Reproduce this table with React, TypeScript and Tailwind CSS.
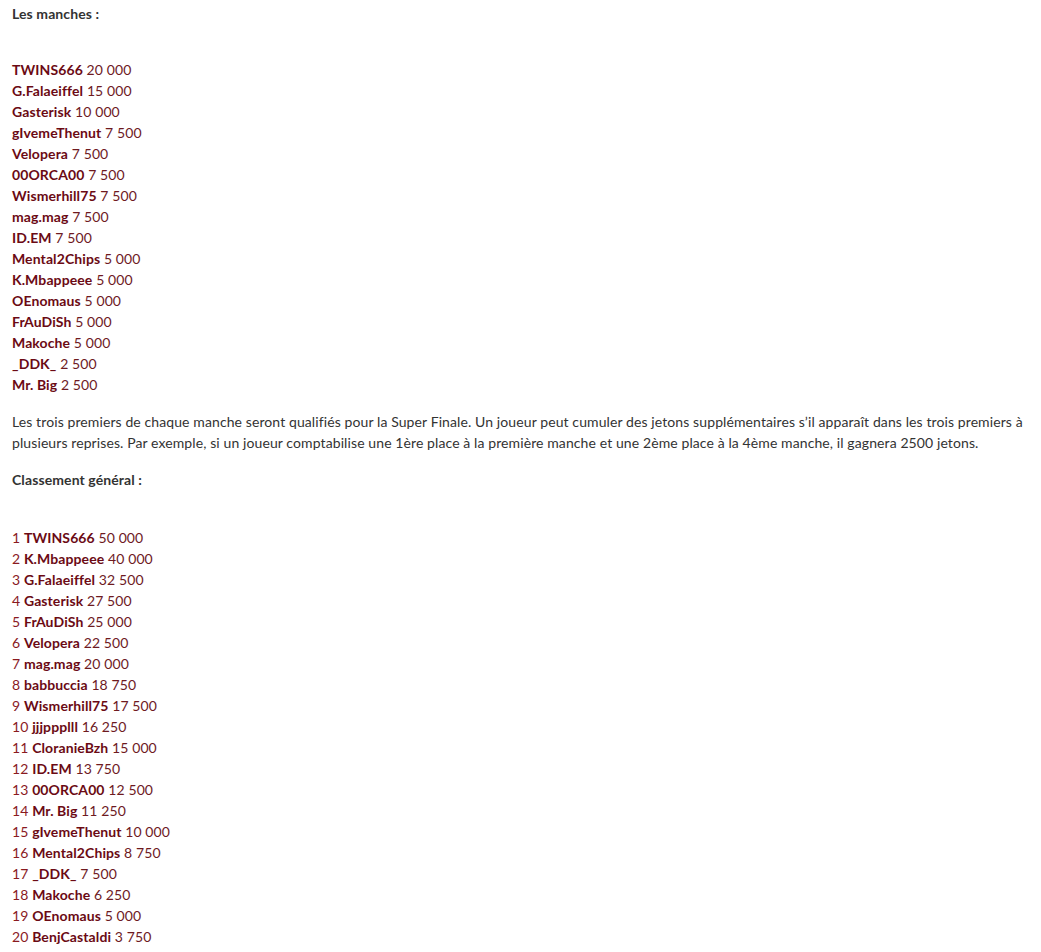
import React from "react";

const manches: [string, string][] = [
  ["TWINS666", "20 000"],
  ["G.Falaeiffel", "15 000"],
  ["Gasterisk", "10 000"],
  ["gIvemeThenut", "7 500"],
  ["Velopera", "7 500"],
  ["00ORCA00", "7 500"],
  ["Wismerhill75", "7 500"],
  ["mag.mag", "7 500"],
  ["ID.EM", "7 500"],
  ["Mental2Chips", "5 000"],
  ["K.Mbappeee", "5 000"],
  ["OEnomaus", "5 000"],
  ["FrAuDiSh", "5 000"],
  ["Makoche", "5 000"],
  ["_DDK_", "2 500"],
  ["Mr. Big", "2 500"],
];

const general: [string, string][] = [
  ["TWINS666", "50 000"],
  ["K.Mbappeee", "40 000"],
  ["G.Falaeiffel", "32 500"],
  ["Gasterisk", "27 500"],
  ["FrAuDiSh", "25 000"],
  ["Velopera", "22 500"],
  ["mag.mag", "20 000"],
  ["babbuccia", "18 750"],
  ["Wismerhill75", "17 500"],
  ["jjjppplll", "16 250"],
  ["CloranieBzh", "15 000"],
  ["ID.EM", "13 750"],
  ["00ORCA00", "12 500"],
  ["Mr. Big", "11 250"],
  ["gIvemeThenut", "10 000"],
  ["Mental2Chips", "8 750"],
  ["_DDK_", "7 500"],
  ["Makoche", "6 250"],
  ["OEnomaus", "5 000"],
  ["BenjCastaldi", "3 750"],
];

export default function App() {
  return (
    <div
      className="bg-white min-h-[952px] pl-3 pr-3 pt-[3px] text-[14px] leading-[21px] tracking-[0.1px] text-[#333333]"
      style={{ fontFamily: "Lato, 'Open Sans', sans-serif" }}
    >
      <p className="font-bold text-[#333333]">Les manches :</p>
      <div className="mt-[35px] text-[#6e1a1f]">
        {manches.map(([n, v], i) => (
          <div key={i}>
            <span className="font-bold text-[#6b0a14]">{n}</span> {v}
          </div>
        ))}
      </div>
      <p className="mt-[17px] leading-[20.5px]">
        Les trois premiers de chaque manche seront qualifiés pour la Super Finale. Un joueur peut cumuler des jetons supplémentaires s’il apparaît dans les trois premiers à plusieurs reprises. Par exemple, si un joueur comptabilise une 1ère place à la première manche et une 2ème place à la 4ème manche, il gagnera 2500 jetons.
      </p>
      <p className="mt-[16px] font-bold text-[#333333]">Classement général :</p>
      <div className="mt-[37px] text-[#6e1a1f]">
        {general.map(([n, v], i) => (
          <div key={i}>
            <span className="text-[#8a1a1f]">{i + 1}</span>{" "}
            <span className="font-bold text-[#6b0a14]">{n}</span> {v}
          </div>
        ))}
      </div>
    </div>
  );
}
